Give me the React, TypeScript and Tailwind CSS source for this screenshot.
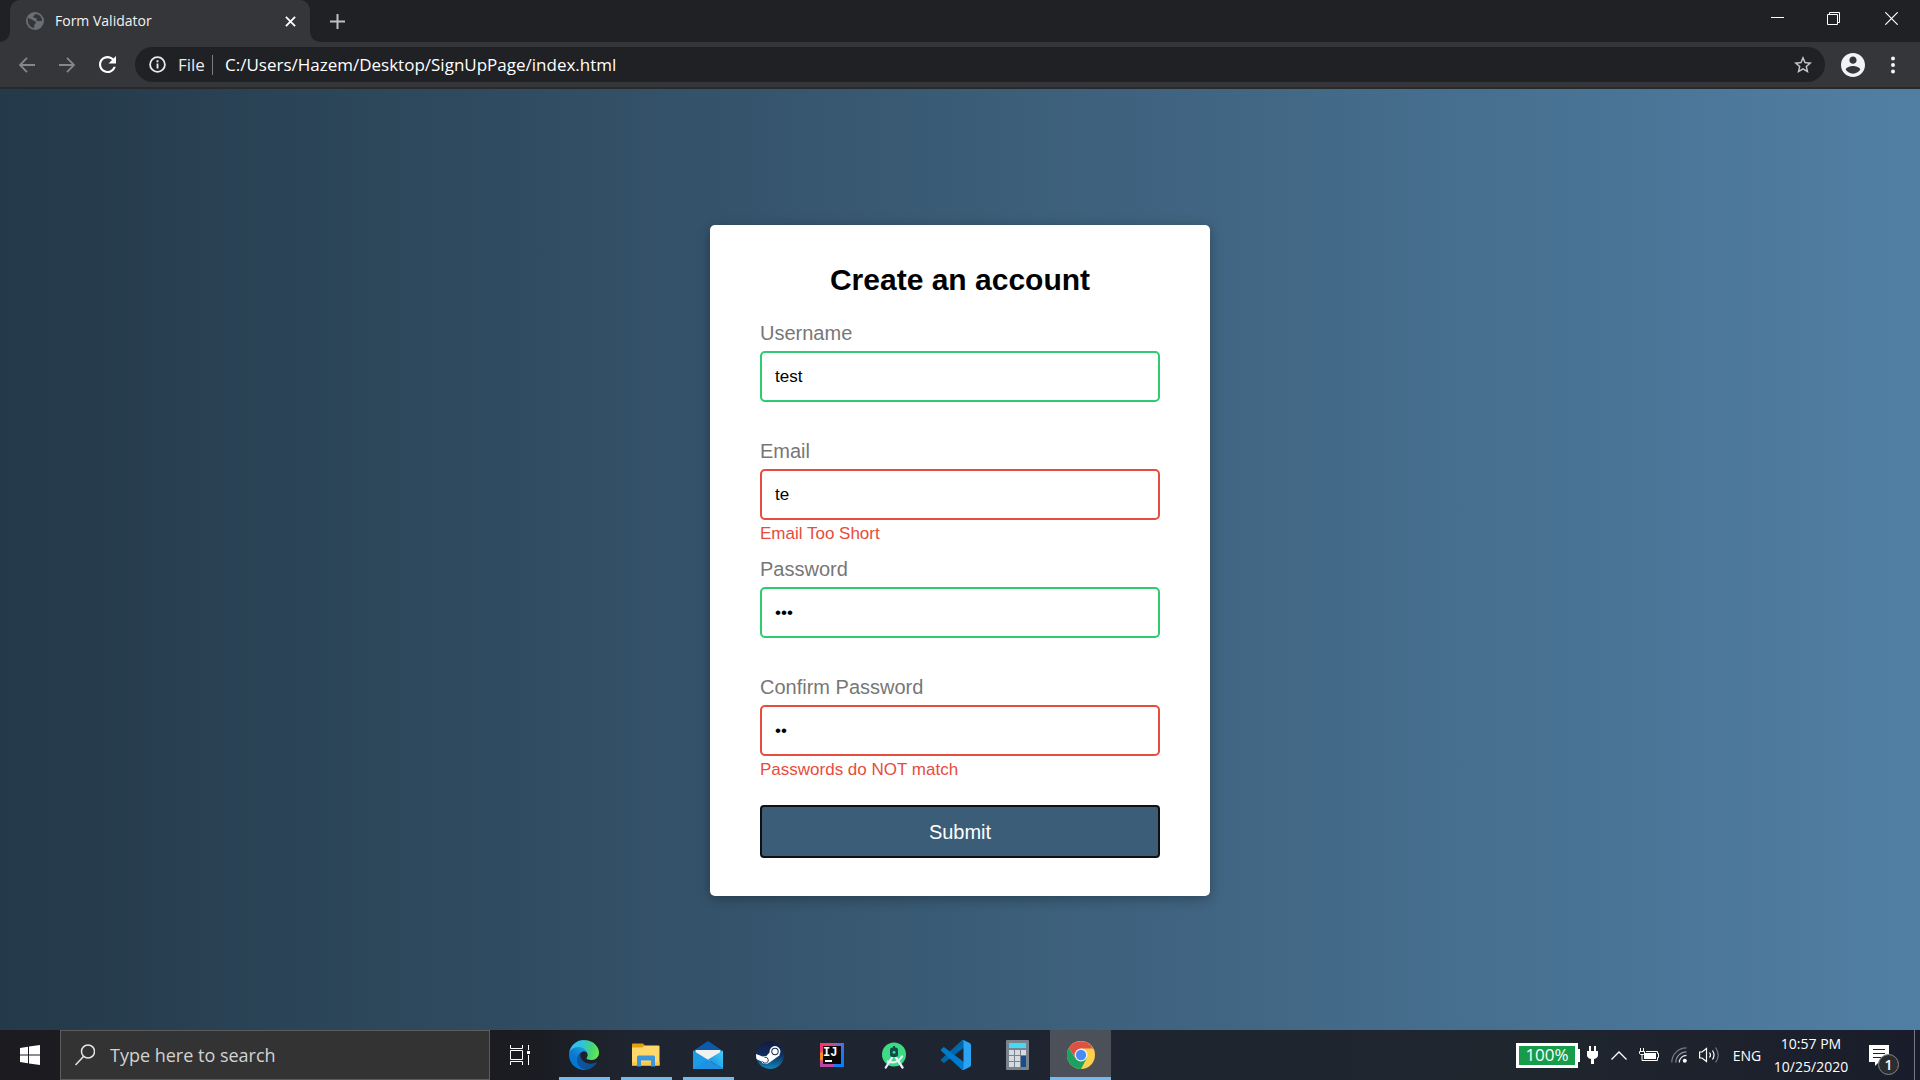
import React from "react";

type Status = "success" | "error";

type FieldProps = {
  id: string;
  label: string;
  type: string;
  value: string;
  status: Status;
  message?: string;
};

function Field({ id, label, type, value, status, message }: FieldProps) {
  return (
    <div className="flex h-[118px] flex-col">
      <label htmlFor={id} className="mb-[6px] text-[20px] leading-6 text-[#777777]">
        {label}
      </label>
      <input
        id={id}
        type={type}
        defaultValue={value}
        className={
          status === "success"
            ? "block h-[51px] w-full rounded-[5px] border-2 border-[#2ecc71] bg-white px-[13px] text-[17px] text-black outline-none"
            : "block h-[51px] w-full rounded-[5px] border-2 border-[#e74c3c] bg-white px-[13px] text-[17px] text-black outline-none"
        }
      />
      <small className="mt-1 text-[17px] leading-5 text-[#e74c3c]">{message}</small>
    </div>
  );
}

function TabStrip() {
  return (
    <header className="flex h-[42px] bg-[#202124]">
      <svg width="10" height="10" className="shrink-0 self-end" aria-hidden="true">
        <path d="M0 10A10 10 0 0 0 10 0V10Z" fill="#35363a" />
      </svg>
      <div className="flex w-[300px] items-center rounded-t-[10px] bg-[#35363a] pr-3 pl-4">
        <svg width="18" height="18" viewBox="0 0 18 18" className="shrink-0" aria-hidden="true">
          <circle cx="9" cy="9" r="9" fill="#6b6e73" />
          <path d="M2 5.500C3.600 7.500 5.200 6.500 6.500 8C7.500 9.200 9.500 8.500 9.800 10.200C10 11.500 8.500 11.800 8.300 13.200C8.200 14 8.800 14.800 7.500 15.900C3.600 15.200 0.800 11 2 5.500Z" fill="#35363a" />
          <path d="M8.800 2C9.500 3.200 7 3.600 7.300 5C7.600 6.300 9.800 5.200 10.500 6.500C11.200 7.800 9.800 8.400 11.500 9C13 9.500 13.800 8.600 15.900 9.300C16.500 5.500 13.500 2 8.800 2Z" fill="#35363a" />
        </svg>
        <span className="ml-[11px] flex-1 pb-0.5 text-[14px] text-[#f1f3f4]">Form Validator</span>
        <button type="button" aria-label="Close tab" className="flex h-5 w-5 items-center justify-center rounded-full pl-1">
          <svg width="11" height="11" viewBox="0 0 12 12" fill="none" stroke="#ffffff" strokeWidth="2">
            <path d="M1 1L11 11M11 1L1 11" />
          </svg>
        </button>
      </div>
      <svg width="10" height="10" className="shrink-0 self-end" aria-hidden="true">
        <path d="M10 10A10 10 0 0 1 0 0V10Z" fill="#35363a" />
      </svg>
      <button type="button" aria-label="New tab" className="flex w-[35px] items-center justify-center">
        <svg width="15" height="15" viewBox="0 0 15 15" fill="none" stroke="#bdc1c6" strokeWidth="2">
          <path d="M7.500 0V15M0 7.500H15" />
        </svg>
      </button>
      <div className="flex-1" />
      <div className="flex h-9 items-center">
        <button type="button" aria-label="Minimize" className="flex h-full w-[56px] items-center justify-center">
          <svg width="13" height="13" viewBox="0 0 13 13" stroke="#ffffff"><path d="M0 5.500H13" /></svg>
        </button>
        <button type="button" aria-label="Restore" className="flex h-full w-[57px] items-center justify-center">
          <svg width="13" height="13" viewBox="0 0 13 13" fill="none" stroke="#ffffff">
            <path d="M0.500 2.500H10.500V12.500H0.500ZM2.500 2.500V0.500H12.500V10.500H10.500" />
          </svg>
        </button>
        <button type="button" aria-label="Close" className="flex h-full w-[58px] items-center justify-center">
          <svg width="13" height="13" viewBox="0 0 13 13" fill="none" stroke="#ffffff" strokeWidth="1.200">
            <path d="M0.300 0.300L12.700 12.700M12.700 0.300L0.300 12.700" />
          </svg>
        </button>
      </div>
    </header>
  );
}

function Toolbar() {
  return (
    <nav className="flex h-[47px] items-center border-b-2 border-[#28292b] bg-[#35363a] pl-[7px]">
      <button type="button" aria-label="Back" className="flex h-9 w-10 items-center justify-center">
        <svg width="16" height="16" viewBox="0 0 16 16" fill="none" stroke="#85878b" strokeWidth="1.800">
          <path d="M8 0.800L1 8L8 15.200M1 8H16" />
        </svg>
      </button>
      <button type="button" aria-label="Forward" className="flex h-9 w-10 items-center justify-center">
        <svg width="16" height="16" viewBox="0 0 16 16" fill="none" stroke="#85878b" strokeWidth="1.800">
          <path d="M8 0.800L15 8L8 15.200M15 8H0" />
        </svg>
      </button>
      <button type="button" aria-label="Reload" className="flex h-9 w-[41px] items-center justify-center">
        <svg width="17" height="17" viewBox="4 4 16 16" fill="#ffffff">
          <path d="M17.650 6.350C16.200 4.900 14.210 4 12 4c-4.420 0-7.990 3.580-7.990 8s3.570 8 7.990 8c3.730 0 6.840-2.550 7.730-6h-2.080c-.82 2.330-3.040 4-5.650 4-3.310 0-6-2.690-6-6s2.690-6 6-6c1.660 0 3.140.69 4.220 1.780L13 11h7V4l-2.350 2.350z" />
        </svg>
      </button>
      <div className="ml-[7px] flex h-[35px] flex-1 items-center rounded-full bg-[#202124] pr-[13px] pl-[14px] text-[17px]">
        <svg width="17" height="17" viewBox="0 0 17 17" className="shrink-0" aria-hidden="true">
          <circle cx="8.500" cy="8.500" r="7.400" fill="none" stroke="#e8eaed" strokeWidth="1.800" />
          <path d="M8.500 7.500V12.500M8.500 4.200V6.200" stroke="#e8eaed" strokeWidth="1.900" />
        </svg>
        <span className="ml-3 w-[34px] text-[#e8eaed]">File</span>
        <span className="mr-3 h-5 w-px bg-[#7b7e82]" />
        <input
          aria-label="Address"
          defaultValue="C:/Users/Hazem/Desktop/SignUpPage/index.html"
          className="min-w-0 flex-1 bg-transparent text-[#ffffff] outline-none"
        />
        <button type="button" aria-label="Bookmark this page">
          <svg width="18" height="18" viewBox="2 2 20 20" fill="#c4c7cb">
            <path d="M22 9.240l-7.190-.62L12 2 9.190 8.630 2 9.240l5.460 4.730L5.820 21 12 17.270 18.180 21l-1.630-7.030L22 9.240zM12 15.400l-3.760 2.270 1-4.280-3.320-2.880 4.380-.38L12 6.100l1.710 4.040 4.380.38-3.320 2.880 1 4.280L12 15.400z" />
          </svg>
        </button>
      </div>
      <button type="button" aria-label="Profile" className="flex h-9 w-[55px] items-center justify-center">
        <svg width="24" height="24" viewBox="2 2 20 20" fill="#f1f3f4">
          <path d="M12 2C6.480 2 2 6.480 2 12s4.480 10 10 10 10-4.480 10-10S17.520 2 12 2zm0 3c1.660 0 3 1.340 3 3s-1.340 3-3 3-3-1.340-3-3 1.340-3 3-3zm0 14.200c-2.500 0-4.710-1.280-6-3.220.030-1.990 4-3.080 6-3.080 1.990 0 5.970 1.090 6 3.080-1.290 1.940-3.500 3.220-6 3.220z" />
        </svg>
      </button>
      <button type="button" aria-label="Menu" className="mr-[14px] flex h-9 w-[26px] items-center justify-center">
        <svg width="4" height="18" viewBox="0 0 4 18" fill="#f1f3f4">
          <circle cx="2" cy="2.500" r="2" />
          <circle cx="2" cy="9" r="2" />
          <circle cx="2" cy="15.500" r="2" />
        </svg>
      </button>
    </nav>
  );
}

function SignUpCard() {
  return (
    <form
      className="w-[500px] max-w-full rounded-[5px] bg-white px-[50px] pt-9 pb-[38px] font-['Liberation_Sans',Arial,sans-serif] shadow-[0_3px_13px_rgba(0,0,0,0.3)]"
      onSubmit={(e: React.FormEvent) => e.preventDefault()}
    >
      <h2 className="mb-[22px] text-center text-[30px] leading-[38px] font-bold text-black">Create an account</h2>
      <Field id="username" label="Username" type="text" value="test" status="success" />
      <Field id="email" label="Email" type="text" value="te" status="error" message="Email Too Short" />
      <Field id="password" label="Password" type="password" value="abc" status="success" />
      <Field
        id="confirm"
        label="Confirm Password"
        type="password"
        value="ab"
        status="error"
        message="Passwords do NOT match"
      />
      <button
        type="submit"
        className="mt-3 block h-[53px] w-full rounded-[4px] border-2 border-[#101010] bg-[#3c5d78] text-[20px] text-white"
      >
        Submit
      </button>
    </form>
  );
}

function EdgeIcon() {
  return (
    <svg width="30" height="30" viewBox="0 0 256 256" aria-hidden="true">
      <defs>
        <linearGradient id="edge-a" x1="63" y1="178" x2="241" y2="178" gradientUnits="userSpaceOnUse">
          <stop offset="0" stopColor="#0c59a4" />
          <stop offset="1" stopColor="#114a8b" />
        </linearGradient>
        <linearGradient id="edge-b" x1="157" y1="99" x2="46" y2="221" gradientUnits="userSpaceOnUse">
          <stop offset="0" stopColor="#1b9de2" />
          <stop offset="0.600" stopColor="#0e78cf" />
          <stop offset="1" stopColor="#0078d4" />
        </linearGradient>
        <linearGradient id="edge-c" x1="20" y1="60" x2="255" y2="120" gradientUnits="userSpaceOnUse">
          <stop offset="0" stopColor="#35c1f1" />
          <stop offset="0.350" stopColor="#2fc2df" />
          <stop offset="0.700" stopColor="#43d37c" />
          <stop offset="1" stopColor="#66eb4e" />
        </linearGradient>
      </defs>
      <g transform="translate(-4.630 -4.920)">
        <path fill="url(#edge-a)" d="M235.680 195.460a93.730 93.730 0 0 1-10.540 4.710 101.870 101.870 0 0 1-35.900 6.460c-47.320 0-88.540-32.550-88.540-74.320A31.480 31.480 0 0 1 117.130 105c-42.800 1.800-53.800 46.400-53.800 72.530 0 73.880 68.090 81.370 82.760 81.370 7.910 0 19.840-2.300 27-4.560l1.310-.44a128.340 128.340 0 0 0 66.600-52.800 4 4 0 0 0-5.320-5.640Z" />
        <path fill="url(#edge-b)" d="M110.340 246.340A79.200 79.200 0 0 1 87.600 225a80.720 80.720 0 0 1 29.530-120c3.120-1.470 8.450-4.130 15.540-4a32.350 32.350 0 0 1 25.690 13 31.880 31.880 0 0 1 6.360 18.660c0-.21 24.460-79.600-80-79.600-43.900 0-80 41.660-80 78.210a130.150 130.150 0 0 0 12.110 56 128 128 0 0 0 156.380 67.110 75.550 75.550 0 0 1-62.780-8Z" />
        <path fill="url(#edge-c)" d="M156.940 153.780c-.81 1.050-3.300 2.500-3.300 5.660 0 2.610 1.700 5.120 4.720 7.230 14.380 10 41.490 8.680 41.560 8.680a59.560 59.560 0 0 0 30.270-8.350 61.380 61.380 0 0 0 30.430-52.880c.26-22.410-8-37.310-11.340-43.910-21.190-41.450-66.930-65.290-116.670-65.290a128 128 0 0 0-128 126.200c.48-36.540 36.800-66.050 80-66.050 3.500 0 23.460.34 42 10.070 16.340 8.580 24.900 18.940 30.850 29.210 6.180 10.670 7.280 24.150 7.280 29.520s-2.740 13.330-7.800 19.910Z" />
      </g>
    </svg>
  );
}

function FolderIcon() {
  return (
    <svg width="28" height="24" viewBox="0 0 28 24" aria-hidden="true">
      <path d="M0 1.500Q0 0.500 1 0.500H11L14 3.500H12L10.500 5H0Z" fill="#e0a010" />
      <path d="M0 4.500H10L13 2.500H26.500Q27.500 2.500 27.500 3.500V22.500H0.500Q0 22.500 0 22Z" fill="#ffd76a" />
      <path d="M0 19H27.500V22.500H0Z" fill="#fbc84a" />
      <path d="M5 23.500V14Q5 12.500 6.500 12.500H21.500Q23 12.500 23 14V23.500H19V17.500H9V23.500Z" fill="#3a96dd" />
    </svg>
  );
}

function MailIcon() {
  return (
    <svg width="30" height="28" viewBox="0 0 30 28" aria-hidden="true">
      <defs>
        <linearGradient id="mail-a" x1="0" y1="1" x2="1" y2="0">
          <stop offset="0" stopColor="#1681d8" />
          <stop offset="1" stopColor="#3fd0fb" />
        </linearGradient>
      </defs>
      <path d="M0 10L15 0L30 10V14H0Z" fill="#0a5cab" />
      <path d="M2.500 9H27.500V14L15 21L2.500 14Z" fill="#f1f1f1" />
      <path d="M0 9.500L30 28H0Z" fill="#1f9be6" />
      <path d="M30 9.500V28L15 18.500Z" fill="url(#mail-a)" />
      <path d="M15 18.500L30 28H0Z" fill="#1b8ade" opacity="0.500" />
    </svg>
  );
}

function SteamIcon() {
  return (
    <svg width="28" height="28" viewBox="0 0 28 28" aria-hidden="true">
      <defs>
        <linearGradient id="steam-a" x1="0" y1="0" x2="0" y2="1">
          <stop offset="0" stopColor="#141a3c" />
          <stop offset="0.500" stopColor="#0f2f5e" />
          <stop offset="1" stopColor="#1387b8" />
        </linearGradient>
        <clipPath id="steam-c"><circle cx="14" cy="14" r="14" /></clipPath>
      </defs>
      <g clipPath="url(#steam-c)">
        <rect width="28" height="28" fill="url(#steam-a)" />
        <path d="M0 13L9 16.500L14 11L24 14L13.500 21.500L9 22L0 18Z" fill="#ffffff" />
        <circle cx="19" cy="10.500" r="5.400" fill="#ffffff" />
        <circle cx="19" cy="10.500" r="3.700" fill="#17264e" />
        <circle cx="19" cy="10.500" r="2.700" fill="#ffffff" />
        <circle cx="9.500" cy="19" r="4" fill="#ffffff" />
        <path d="M6.500 20.300A3 3 0 1 0 8.500 16.300" fill="none" stroke="#12406e" strokeWidth="1" />
      </g>
    </svg>
  );
}

function IntelliJIcon() {
  return (
    <svg width="24" height="24" viewBox="0 0 24 24" aria-hidden="true">
      <defs>
        <linearGradient id="ij-a" x1="0" y1="0" x2="1" y2="0.600">
          <stop offset="0" stopColor="#fe2f66" />
          <stop offset="0.350" stopColor="#e8417a" />
          <stop offset="0.650" stopColor="#5a6be0" />
          <stop offset="1" stopColor="#0a7cf8" />
        </linearGradient>
      </defs>
      <rect width="24" height="24" fill="url(#ij-a)" />
      <path d="M0 10L4 8V17L0 18Z" fill="#f98b1d" />
      <path d="M0 18L4 16V20H14V24H0Z" fill="#b74aa0" />
      <rect x="3" y="3" width="18" height="18" fill="#080808" />
      <text x="3" y="13" fill="#ffffff" fontSize="12" fontWeight="700" fontFamily="Liberation Mono, monospace">IJ</text>
      <rect x="5" y="17" width="7" height="2" fill="#ffffff" />
    </svg>
  );
}

function AndroidStudioIcon() {
  return (
    <svg width="25" height="27" viewBox="0 0 25 27" aria-hidden="true">
      <circle cx="12" cy="12.500" r="12" fill="#3ddc84" />
      <path d="M10 15.500L3.800 25.500M14 15.500L20.500 25.500" stroke="#e6effa" strokeWidth="2.300" strokeLinecap="round" />
      <path d="M6 19.500Q15 22.500 20 14.500" fill="none" stroke="#e6effa" strokeWidth="2.300" strokeLinecap="round" />
      <rect x="8" y="5.500" width="8" height="9.500" rx="2.500" fill="#0f4a4c" />
      <rect x="11" y="4" width="2" height="3" fill="#0f4a4c" />
      <circle cx="12" cy="10.300" r="1.500" fill="#3ddc84" />
    </svg>
  );
}

function VsCodeIcon() {
  return (
    <svg width="30" height="30" viewBox="0 0 100 100" aria-hidden="true">
      <path fill="#0065a9" d="M96.461 10.796L75.857 0.876C73.472-0.273 70.622 0.212 68.750 2.083L1.299 63.583C-0.516 65.237-0.514 68.094 1.303 69.745L6.813 74.754C8.298 76.104 10.535 76.204 12.134 74.991L93.361 13.370C96.086 11.303 100 13.246 100 16.667V16.428C100 14.027 98.625 11.838 96.461 10.796Z" />
      <path fill="#007acc" d="M96.461 89.204L75.857 99.124C73.472 100.273 70.622 99.788 68.750 97.917L1.299 36.417C-0.516 34.763-0.514 31.906 1.303 30.255L6.813 25.246C8.298 23.896 10.535 23.796 12.134 25.009L93.361 86.630C96.086 88.697 100 86.754 100 83.333V83.573C100 85.974 98.625 88.162 96.461 89.204Z" />
      <path fill="#2aa3f4" d="M75.858 99.126C73.472 100.274 70.622 99.789 68.750 97.917C71.056 100.223 75 98.590 75 95.328V4.672C75 1.410 71.056-0.223 68.750 2.083C70.622 0.211 73.472-0.274 75.858 0.874L96.459 10.781C98.623 11.822 100 14.011 100 16.413V83.587C100 85.989 98.623 88.179 96.459 89.220L75.858 99.126Z" />
    </svg>
  );
}

function CalculatorIcon() {
  const keys = [
    [3, 10], [9, 10], [15, 10],
    [3, 16], [9, 16],
    [3, 22], [9, 22],
  ];
  return (
    <svg width="24" height="30" viewBox="0 0 24 30" aria-hidden="true">
      <rect width="23" height="30" rx="1" fill="#7b828b" />
      <rect x="3" y="3" width="17" height="5" fill="#40dcfa" />
      {keys.map(([x, y]) => (
        <rect key={`${x}-${y}`} x={x} y={y} width="5" height="5" fill="#d5dbe2" />
      ))}
      <rect x="15" y="16" width="5" height="11" fill="#174c8e" />
    </svg>
  );
}

function ChromeIcon() {
  return (
    <svg width="28" height="28" viewBox="0 0 48 48" aria-hidden="true">
      <circle cx="24" cy="24" r="24" fill="#fcd04b" />
      <path d="M24 13H44.800A24 24 0 0 0 3.200 12L14.500 29.500Z" fill="#de5246" />
      <path d="M24 48L33.700 29.500L24 24L14 29L3.200 12A24 24 0 0 0 24 48Z" fill="#1aa260" />
      <circle cx="24" cy="24" r="11" fill="#f1f1f1" />
      <circle cx="24" cy="24" r="8.800" fill="#4a8af4" />
    </svg>
  );
}

const apps = [
  { name: "Microsoft Edge", icon: <EdgeIcon />, open: true },
  { name: "File Explorer", icon: <FolderIcon />, open: true },
  { name: "Mail", icon: <MailIcon />, open: true },
  { name: "Steam", icon: <SteamIcon />, open: false },
  { name: "IntelliJ IDEA", icon: <IntelliJIcon />, open: false },
  { name: "Android Studio", icon: <AndroidStudioIcon />, open: false },
  { name: "Visual Studio Code", icon: <VsCodeIcon />, open: false },
  { name: "Calculator", icon: <CalculatorIcon />, open: false },
];

function SystemTray() {
  return (
    <div className="flex items-center text-[14px] text-white">
      <div className="flex items-center">
        <span className="flex h-[25px] w-[62px] items-center justify-center border-[3px] border-white bg-[#169c4a] text-[17px]">
          100%
        </span>
        <span className="h-[13px] w-[2px] bg-white" />
      </div>
      <div className="flex w-[25px] justify-center">
        <svg width="11" height="18" viewBox="0 0 11 18" fill="#ffffff" aria-hidden="true">
          <path d="M2 0H4V5H7V0H9V5H11V9Q11 12 7 13V18H4V13Q0 12 0 9V5H2Z" />
        </svg>
      </div>
      <button type="button" aria-label="Show hidden icons" className="flex h-10 w-7 items-center justify-center">
        <svg width="16" height="9" viewBox="0 0 16 9" fill="none" stroke="#ffffff" strokeWidth="1.300"><path d="M0.500 8.500L8 1L15.500 8.500" /></svg>
      </button>
      <button type="button" aria-label="Power" className="flex h-10 w-8 items-center justify-center">
        <svg width="20" height="14" viewBox="0 0 20 14" fill="none" stroke="#ffffff" aria-hidden="true">
          <path d="M1.500 0V3M4.500 0V3M0.500 3.500H5.500V5.500L4.500 6.500H1.500L0.500 5.500ZM3 6.500V12.500H18.500V9.500H19.500V5.500H18.500V3.500H7" />
          <rect x="5" y="5" width="12" height="6" fill="#ffffff" stroke="none" />
        </svg>
      </button>
      <button type="button" aria-label="Network" className="flex h-10 w-7 items-center justify-center">
        <svg width="16" height="16" viewBox="0 0 16 16" fill="none" strokeWidth="1.200" aria-hidden="true">
          <path d="M0.800 15.500A14.700 14.700 0 0 1 15.500 0.800" stroke="#777b82" />
          <path d="M4.800 15.500A10.700 10.700 0 0 1 15.500 4.800" stroke="#8c9096" />
          <path d="M8.300 15.500A7.200 7.200 0 0 1 15.500 8.300" stroke="#e5e5e5" />
          <circle cx="13.800" cy="13.800" r="2" fill="#ffffff" />
        </svg>
      </button>
      <button type="button" aria-label="Volume" className="flex h-10 w-[33px] items-center justify-center">
        <svg width="21" height="18" viewBox="0 0 21 18" fill="none" stroke="#ffffff" strokeWidth="1.200" aria-hidden="true">
          <path d="M0.600 6V12H3L7.500 15.500V2.500L3 6Z" />
          <path d="M10.500 6.500Q12.500 9 10.500 11.500M13.500 4.500Q16.500 9 13.500 13.500" />
          <path d="M16.500 1.500Q22 9 16.500 16.500" stroke="#777b82" />
        </svg>
      </button>
      <button type="button" className="h-10 w-[42px] text-center">ENG</button>
      <time className="w-[86px] text-center leading-[23px]">
        10:57 PM
        <br />
        10/25/2020
      </time>
      <button type="button" aria-label="Notifications" className="relative flex h-[50px] w-[60px] items-center pl-[15px]">
        <svg width="20" height="21" viewBox="0 0 20 21" aria-hidden="true">
          <path d="M0 0H20V17H10L6 21V17H0Z" fill="#ffffff" />
          <path d="M4 4.500H16M4 8.500H16M4 12.500H12" stroke="#1b212d" strokeWidth="1.200" />
        </svg>
        <span className="absolute top-6 left-6 flex h-[21px] w-[21px] items-center justify-center rounded-full border border-[#85878b] bg-[#2b2d31] text-[14px] leading-none font-semibold">
          1
        </span>
      </button>
      <button type="button" aria-label="Show desktop" className="h-[50px] w-[6px] border-l border-[#747982]" />
    </div>
  );
}

function Taskbar() {
  return (
    <footer className="flex h-[50px] bg-[linear-gradient(to_right,#1b1b20_0%,#1b1c22_28%,#1f2530_33%,#1f2530_58%,#20262e_80%,#191d2b_100%)]">
      <button type="button" aria-label="Start" className="flex w-[60px] items-center justify-center">
        <svg width="20" height="20" viewBox="0 0 20 20" fill="#ffffff">
          <path d="M0 3L8 1.800V9.500H0ZM9 1.600L20 0V9.500H9ZM0 10.500H8V18.200L0 17ZM9 10.500H20V20L9 18.400Z" />
        </svg>
      </button>
      <label className="flex w-[430px] items-center border border-[#5c5c5c] bg-[#333333] pl-[14px]">
        <svg width="20" height="22" viewBox="0 0 20 22" fill="none" stroke="#e6e6e6" strokeWidth="1.500" aria-hidden="true">
          <circle cx="13" cy="7.500" r="6.500" />
          <path d="M8.500 12.500L0.500 21" />
        </svg>
        <input
          aria-label="Search"
          placeholder="Type here to search"
          className="ml-[15px] flex-1 bg-transparent text-[18px] outline-none placeholder:text-[#d2d2d2]"
        />
      </label>
      <button type="button" aria-label="Task view" className="flex w-[63px] items-center justify-center pr-0.5">
        <svg width="21" height="20" viewBox="0 0 21 20" fill="none" stroke="#ffffff">
          <path d="M0.500 0V3.500H12.500V0M0.500 20V16.500H12.500V20M0.500 5.500H12.500V14.500H0.500ZM18.500 0V5M18.500 10V20" />
          <rect x="17" y="6" width="3" height="3" fill="#ffffff" stroke="none" />
        </svg>
      </button>
      {apps.map((app) => (
        <button
          key={app.name}
          type="button"
          aria-label={app.name}
          className="flex w-[62px] flex-col items-center"
        >
          <span className="flex flex-1 items-center pt-[3px]">{app.icon}</span>
          <span className={app.open ? "h-[3px] w-[51px] bg-[#76b9ed]" : "h-[3px] w-[51px]"} />
        </button>
      ))}
      <button
        type="button"
        aria-label="Google Chrome"
        className="ml-px flex w-[61px] flex-col items-center bg-[#4c5159]"
      >
        <span className="flex flex-1 items-center pt-[3px]"><ChromeIcon /></span>
        <span className="h-[3px] w-full bg-[#76b9ed]" />
      </button>
      <div className="flex-1" />
      <SystemTray />
    </footer>
  );
}

export default function App() {
  return (
    <div className="flex min-h-screen flex-col font-['Open_Sans','Noto_Sans',sans-serif]">
      <TabStrip />
      <Toolbar />
      <main className="flex flex-1 items-center justify-center bg-[linear-gradient(to_right,#243949_0%,#517fa4_100%)] pt-0.5">
        <SignUpCard />
      </main>
      <Taskbar />
    </div>
  );
}
